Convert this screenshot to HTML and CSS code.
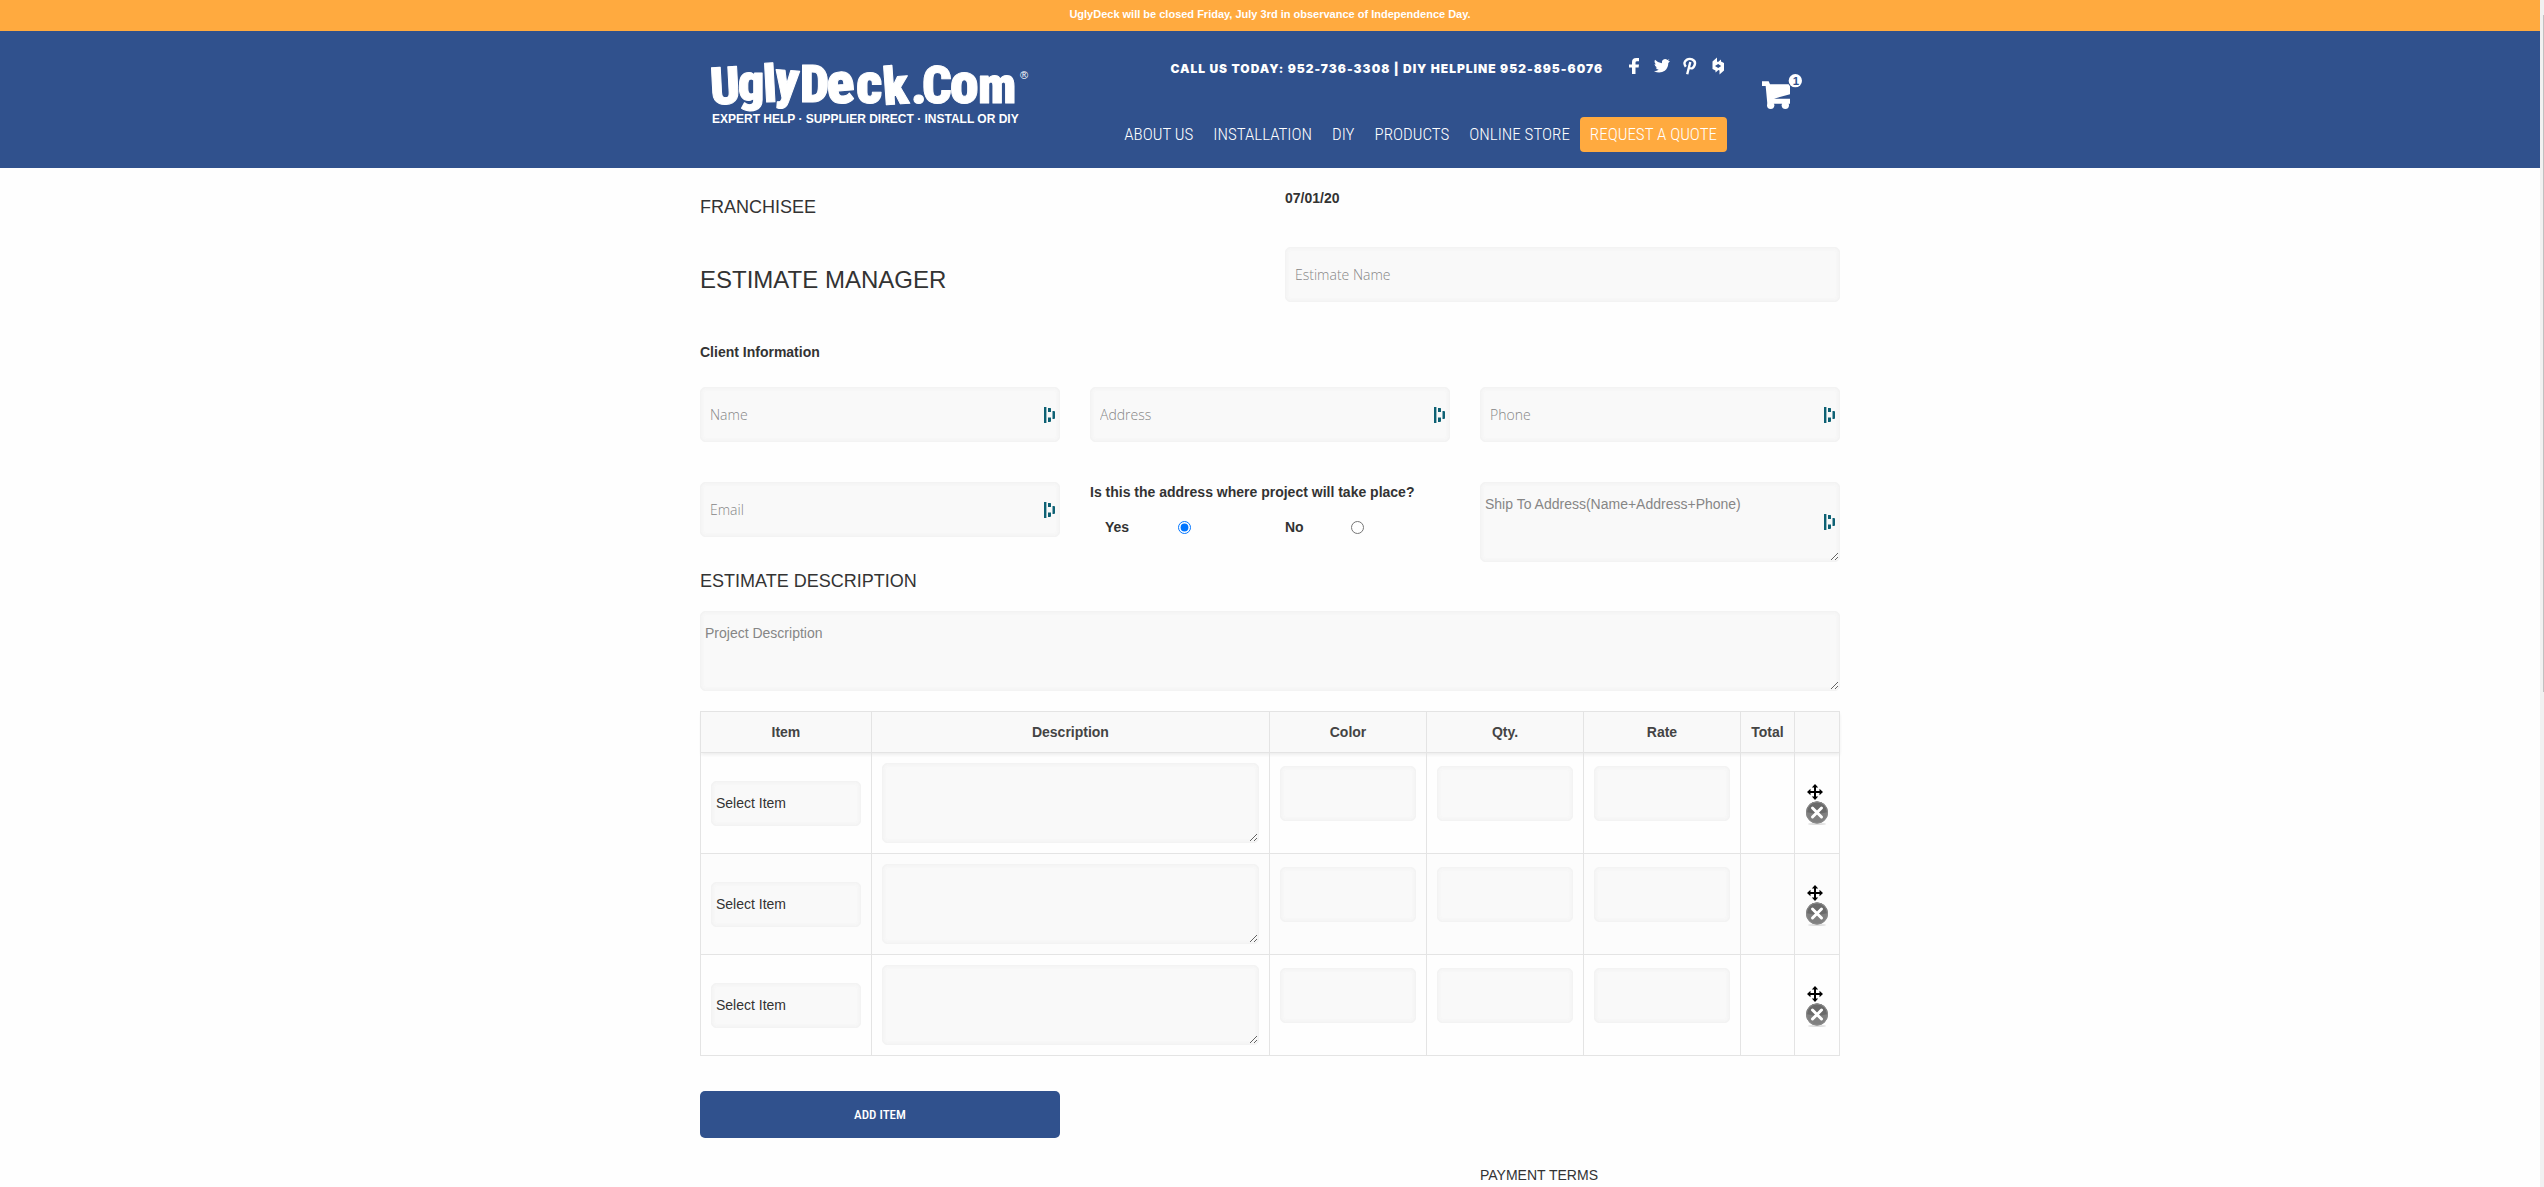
FILE: index.html
```html
<!DOCTYPE html>
<html lang="en">
<head>
  <meta charset="UTF-8" />
  <meta name="viewport" content="width=device-width, initial-scale=1.0"/>
  <title>Estimate Manager - UglyDeck.com</title>
  <link rel="stylesheet" href="styles.css">
</head>
<body>

  <!-- Shared icons -->
  <svg class="sprite" aria-hidden="true">
    <symbol id="icon-fill" viewBox="0 0 12 16">
      <path fill="#0e6174" d="M0 0h2.4v16H0zM4 1h2.4q.6 0 .6.6V5H4zM4 10.500h3V14q0 1-1 1H4zM8.500 4h1.500q1 0 1 1v6q0 1-1 1H8.500z"/>
    </symbol>
    <symbol id="icon-move" viewBox="0 0 16 16">
      <path d="M8 0l3.200 3.500H9V7h3.500V4.800L16 8l-3.500 3.200V9H9v3.500h2.200L8 16l-3.200-3.500H7V9H3.500v2.200L0 8l3.500-3.200V7H7V3.500H4.800z"/>
    </symbol>
    <symbol id="icon-delete" viewBox="0 0 24 24">
      <ellipse cx="12" cy="23" rx="9" ry="1" fill="#ddd"/>
      <circle cx="12" cy="11.500" r="11" fill="#808080"/>
      <path d="M1.500 11a10.500 10.500 0 0 1 21 0q-10 3-21 0z" fill="#6a6a6a"/>
      <circle cx="12" cy="11.500" r="10.500" fill="none" stroke="#8b8b8b"/>
      <path d="M7.500 7l9 9m0-9l-9 9" stroke="#fff" stroke-width="3" stroke-linecap="round"/>
    </symbol>
  </svg>

  <div class="page">
    <div class="notice">UglyDeck will be closed Friday, July 3rd in observance of Independence Day.</div>

    <header class="header">
      <div class="container header-inner">
        <a href="#" class="logo" aria-label="UglyDeck.Com">
          <svg width="336" height="90" viewBox="-11 -20 336 90">
            <g class="logo-name">
              <text x="0" y="44" transform="rotate(-3 12 44)">U</text>
              <text x="27" y="40">g</text>
              <text x="53" y="42" transform="rotate(-3 58 42)">l</text>
              <text x="63" y="38" transform="rotate(4 76 38)">y</text>
              <text x="89" y="42">D</text>
              <text x="117" y="43" class="logo-big" transform="rotate(-5 131 43)">e</text>
              <text x="145" y="43" class="logo-big">c</text>
              <text x="173" y="44" transform="rotate(-4 186 44)">k</text>
              <text x="200" y="43">.</text>
              <text x="211" y="43">C</text>
              <text x="239" y="43" class="logo-big">o</text>
              <text x="267" y="43">m</text>
            </g>
            <text class="logo-mark" x="309" y="19">®</text>
            <text class="logo-tag" x="1" y="63">EXPERT HELP · SUPPLIER DIRECT · INSTALL OR DIY</text>
          </svg>
        </a>

        <div class="header-right">
          <div class="contact">
            <span class="phones">CALL US TODAY: 952-736-3308 | DIY HELPLINE 952-895-6076</span>
            <div class="social">
              <a href="#" aria-label="Facebook">
                <svg viewBox="0 0 18 18"><path d="M14 1v3.200h-2q-1.500 0-1.500 1.300V7.500H14l-.4 3h-3.100V17H7v-6.500H4v-3h3V5q0-4 4.200-4z"/></svg>
              </a>
              <a href="#" aria-label="Twitter">
                <svg viewBox="0 0 18 18"><path d="M17 4.200l-1.700 1.700q0 5-3.500 7.800Q7 17 1 14.200q3 0 4.700-1.400-2.400-.3-3-2.300h1.400Q1.700 9.300 1.500 7l1.500.4Q.7 5.500 2 2.800q2.900 3.200 6.900 3.400Q8.600 2.400 12 2q1.400 0 2.400 1l2-.8-1.300 1.900z"/></svg>
              </a>
              <a href="#" aria-label="Pinterest">
                <svg viewBox="0 0 18 18"><path fill="none" stroke="#fff" stroke-width="2.400" d="M4.800 9.700Q1.800 5.500 5.500 2.900q2.700-1.600 5.600-.6 4 1.700 2.500 6Q12 12.500 8.300 11M9.300 5L6.200 17.300"/></svg>
              </a>
              <a href="#" aria-label="Houzz">
                <svg viewBox="0 0 18 18"><path d="M3.500 4.500L8 .5v4l1 .5 3-2.500v2l3 1.500v7.500l-4.500 4v-4l-1-.5-3 2.500v-2l-3-1.500zM6 9l3.200 2 3-2-3-2z" fill-rule="evenodd"/></svg>
              </a>
            </div>
          </div>
          <nav class="nav">
            <a href="#">ABOUT US</a>
            <a href="#">INSTALLATION</a>
            <a href="#">DIY</a>
            <a href="#">PRODUCTS</a>
            <a href="#">ONLINE STORE</a>
            <a href="#" class="quote">REQUEST A QUOTE</a>
          </nav>
        </div>

        <a href="#" class="cart" aria-label="Cart">
          <svg width="40" height="36" viewBox="0 0 120 108">
            <path d="M0 22h20l4 9h56l4 6v24L36 74h48v15H16L11 36H0z"/>
            <circle cx="26" cy="94" r="11"/>
            <circle cx="70" cy="94" r="11"/>
            <circle cx="100" cy="20" r="20"/>
            <text x="92" y="34">1</text>
          </svg>
        </a>
      </div>
    </header>

    <form class="container estimate">
      <div class="row halves">
        <div>
          <h3 class="franchisee">FRANCHISEE</h3>
          <h1>ESTIMATE MANAGER</h1>
        </div>
        <div>
          <strong class="date">07/01/20</strong>
          <input type="text" placeholder="Estimate Name" aria-label="Estimate Name">
        </div>
      </div>

      <h4>Client Information</h4>

      <div class="row thirds">
        <div class="field">
          <input type="text" placeholder="Name" aria-label="Name">
          <svg class="fill-icon"><use href="#icon-fill"/></svg>
        </div>
        <div class="field">
          <input type="text" placeholder="Address" aria-label="Address">
          <svg class="fill-icon"><use href="#icon-fill"/></svg>
        </div>
        <div class="field">
          <input type="tel" placeholder="Phone" aria-label="Phone">
          <svg class="fill-icon"><use href="#icon-fill"/></svg>
        </div>
        <div class="field">
          <input type="email" placeholder="Email" aria-label="Email">
          <svg class="fill-icon"><use href="#icon-fill"/></svg>
        </div>
        <fieldset class="same-address">
          <legend>Is this the address where project will take place?</legend>
          <div class="choices">
            <label for="same-yes">Yes</label>
            <input type="radio" id="same-yes" name="same" checked>
            <label for="same-no">No</label>
            <input type="radio" id="same-no" name="same">
          </div>
        </fieldset>
        <div class="field">
          <textarea placeholder="Ship To Address(Name+Address+Phone)" aria-label="Ship To Address"></textarea>
          <svg class="fill-icon"><use href="#icon-fill"/></svg>
        </div>
      </div>

      <h3 class="description-title">ESTIMATE DESCRIPTION</h3>
      <textarea placeholder="Project Description" aria-label="Project Description"></textarea>

      <table class="items">
        <thead>
          <tr>
            <th class="col-item">Item</th>
            <th>Description</th>
            <th class="col-value">Color</th>
            <th class="col-value">Qty.</th>
            <th class="col-value">Rate</th>
            <th class="col-total">Total</th>
            <th class="col-actions"></th>
          </tr>
        </thead>
        <tbody>
          <tr>
            <td><select aria-label="Item"><option>Select Item</option></select></td>
            <td><textarea aria-label="Description"></textarea></td>
            <td><input type="text" aria-label="Color"></td>
            <td><input type="text" aria-label="Qty."></td>
            <td><input type="text" aria-label="Rate"></td>
            <td></td>
            <td class="actions">
              <button type="button" class="move" aria-label="Move"><svg><use href="#icon-move"/></svg></button>
              <button type="button" class="delete" aria-label="Delete"><svg><use href="#icon-delete"/></svg></button>
            </td>
          </tr>
          <tr>
            <td><select aria-label="Item"><option>Select Item</option></select></td>
            <td><textarea aria-label="Description"></textarea></td>
            <td><input type="text" aria-label="Color"></td>
            <td><input type="text" aria-label="Qty."></td>
            <td><input type="text" aria-label="Rate"></td>
            <td></td>
            <td class="actions">
              <button type="button" class="move" aria-label="Move"><svg><use href="#icon-move"/></svg></button>
              <button type="button" class="delete" aria-label="Delete"><svg><use href="#icon-delete"/></svg></button>
            </td>
          </tr>
          <tr>
            <td><select aria-label="Item"><option>Select Item</option></select></td>
            <td><textarea aria-label="Description"></textarea></td>
            <td><input type="text" aria-label="Color"></td>
            <td><input type="text" aria-label="Qty."></td>
            <td><input type="text" aria-label="Rate"></td>
            <td></td>
            <td class="actions">
              <button type="button" class="move" aria-label="Move"><svg><use href="#icon-move"/></svg></button>
              <button type="button" class="delete" aria-label="Delete"><svg><use href="#icon-delete"/></svg></button>
            </td>
          </tr>
        </tbody>
      </table>

      <div class="row thirds footer-row">
        <button type="button" class="add-item">ADD ITEM</button>
        <h5>PAYMENT TERMS</h5>
      </div>
    </form>
  </div>

  <div class="scrollbar" aria-hidden="true"><div class="thumb"></div></div>

</body>
</html>
```
FILE: styles.css
```css
* {
  box-sizing: border-box;
}

body {
  margin: 0;
  font-family: "Liberation Sans", Arial, sans-serif;
  font-size: 14px;
  line-height: 24px;
  color: #333;
  background-color: #fefefe;
}

h1, h3, h4, h5 {
  margin: 0;
  font-weight: normal;
}

.sprite {
  display: none;
}

.page {
  margin-right: 4px;
}

.container {
  max-width: 1140px;
  margin: 0 auto;
}

.notice {
  background-color: #ffaa3f;
  color: white;
  padding: 2px 0 5px;
  text-align: center;
  font-weight: bold;
  font-size: 11px;
}

/* Header */
.header {
  background-color: #30518d;
  color: white;
}

.header-inner {
  display: flex;
  align-items: flex-start;
  padding: 0 38px 16px 0;
}

.header a {
  color: white;
  fill: white;
  text-decoration: none;
}

.header svg {
  display: block;
}

.logo {
  padding-top: 9px;
}

.logo-name {
  font-family: "Roboto Condensed", sans-serif;
  font-weight: 900;
  font-size: 52px;
  stroke: white;
  stroke-width: 1px;
  stroke-linejoin: round;
}

.logo-big {
  font-size: 58px;
}

.logo-mark {
  font-size: 11px;
}

.logo-tag {
  font-size: 12px;
  font-weight: bold;
}

.header-right {
  display: flex;
  flex-direction: column;
  align-items: flex-end;
  gap: 42px;
  margin-left: auto;
  padding-top: 26px;
}

.contact {
  display: flex;
  align-items: flex-end;
  gap: 22px;
}

.phones {
  font-family: Inter, sans-serif;
  font-weight: 900;
  font-size: 12px;
  line-height: 12px;
  letter-spacing: 1px;
}

.social {
  display: flex;
  gap: 10px;
}

.social svg {
  width: 18px;
  height: 18px;
}

.nav {
  display: flex;
}

.nav a {
  padding: 0 10px;
  font-family: "Roboto Condensed", sans-serif;
  font-weight: 300;
  font-size: 17px;
  line-height: 35px;
}

.nav .quote {
  background-color: #ffaa3f;
  border-radius: 4px;
}

.cart {
  margin-left: 35px;
  padding-top: 43px;
}

.cart text {
  fill: #30518d;
  font-size: 34px;
  font-weight: bold;
}

/* Form */
.estimate {
  padding-top: 18px;
}

.row {
  display: grid;
  column-gap: 30px;
}

.halves {
  grid-template-columns: 1fr 1fr;
}

.thirds {
  grid-template-columns: 1fr 1fr 1fr;
  row-gap: 40px;
}

h3 {
  font-size: 18px;
  line-height: 28px;
}

.franchisee {
  line-height: 42px;
}

h1 {
  margin-top: 34px;
  font-size: 24px;
  line-height: 36px;
}

.date {
  display: block;
  margin-bottom: 37px;
}

h4 {
  margin: 38px 0 23px;
  font-size: 14px;
  font-weight: bold;
}

input[type="text"], input[type="tel"], input[type="email"], textarea, select {
  display: block;
  width: 100%;
  margin: 0;
  border: 1px solid #f3f3f3;
  border-radius: 5px;
  background-color: #f9f9f9;
  box-shadow: inset 0 0 4px #f0f0f0;
  color: #333;
  font-size: 14px;
}

input[type="text"], input[type="tel"], input[type="email"] {
  height: 55px;
  padding: 0 9px;
  font-family: "Open Sans", sans-serif;
  font-weight: 300;
}

textarea {
  height: 80px;
  padding: 9px 4px;
  font-family: inherit;
  line-height: 24px;
}

select {
  height: 45px;
  padding: 0 4px;
  appearance: none;
  font-family: inherit;
}

::placeholder {
  color: #868686;
}

.field {
  position: relative;
}

.field:not(:has(textarea)) {
  align-self: start;
}

.fill-icon {
  position: absolute;
  top: 50%;
  right: 4px;
  width: 12px;
  height: 16px;
  margin-top: -8px;
}

.same-address {
  margin: 0;
  padding: 0;
  border: 0;
  font-weight: bold;
  line-height: 20px;
}

.same-address legend {
  padding: 0;
}

.choices {
  display: grid;
  grid-template-columns: 73fr 107fr 66fr 99fr;
  align-items: center;
  padding: 15px 0 0 15px;
}

.choices input {
  width: 13px;
  height: 13px;
  margin: 0;
}

.description-title {
  margin: 5px 0 16px;
}

/* Items table */
.items {
  width: 100%;
  margin-top: 20px;
  border-collapse: collapse;
  table-layout: fixed;
}

.items th, .items td {
  border: 1px solid #e4e4e4;
  padding: 10px;
}

.items th {
  padding: 8px 0;
  color: #444;
}

.items thead {
  background-color: #f9f9f9;
  box-shadow: 0 2px 3px #eee;
}

.items tbody tr:nth-child(even) {
  background-color: #fcfcfc;
}

.items input {
  margin-bottom: 20px;
}

.col-item {
  width: 15%;
}

.col-value {
  width: 157px;
}

.col-total {
  width: 54px;
}

.col-actions {
  width: 45px;
}

.items .actions {
  padding: 3px 10px 0;
}

.actions button {
  display: block;
  padding: 0;
  border: 0;
  background: none;
  cursor: pointer;
}

.actions svg {
  display: block;
  width: 24px;
  height: 24px;
}

.actions .move {
  padding: 0 0 1px 2px;
}

.actions .move svg {
  width: 16px;
  height: 16px;
}

.footer-row {
  margin-top: 35px;
  row-gap: 25px;
}

.add-item {
  height: 47px;
  border: 0;
  border-radius: 5px;
  background-color: #30518d;
  color: white;
  font-family: "Roboto Condensed", sans-serif;
  font-size: 13px;
  font-weight: 500;
  cursor: pointer;
}

h5 {
  grid-column: 3;
  grid-row: 2;
  font-size: 14px;
}

.scrollbar {
  position: fixed;
  top: 0;
  right: 0;
  bottom: 0;
  width: 4px;
  background-color: #f1f1f1;
}

.thumb {
  width: 1px;
  height: 57%;
  margin: 15px 0 0 3px;
  background-color: #c1c1c1;
}
```
